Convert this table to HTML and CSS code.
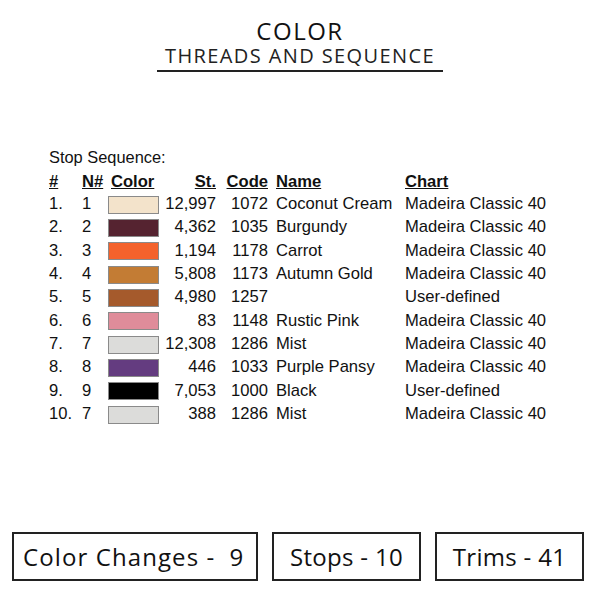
FILE: index.html
```html
<!DOCTYPE html>
<html>
<head>
<meta charset="utf-8">
<link rel="stylesheet" href="styles.css">
</head>
<body>
<div class="page">
  <header class="title">
    <div class="t1">COLOR</div>
    <div class="t2">THREADS AND SEQUENCE</div>
  </header>
  <section class="seq">
    <div class="caption">Stop Sequence:</div>
    <div class="grid">
      <div class="row head">
        <span class="c-n"><u>#</u></span><span class="c-nn"><u>N#</u></span><span class="c-col"><u>Color</u></span><span class="c-st"><u>St.</u></span><span class="c-code"><u>Code</u></span><span class="c-name"><u>Name</u></span><span class="c-chart"><u>Chart</u></span>
      </div>
      <div class="row"><span class="c-n">1.</span><span class="c-nn">1</span><span class="c-col"><i class="sw" style="background:#f3e3cb"></i></span><span class="c-st">12,997</span><span class="c-code">1072</span><span class="c-name">Coconut Cream</span><span class="c-chart">Madeira Classic 40</span></div>
      <div class="row"><span class="c-n">2.</span><span class="c-nn">2</span><span class="c-col"><i class="sw" style="background:#552330"></i></span><span class="c-st">4,362</span><span class="c-code">1035</span><span class="c-name">Burgundy</span><span class="c-chart">Madeira Classic 40</span></div>
      <div class="row"><span class="c-n">3.</span><span class="c-nn">3</span><span class="c-col"><i class="sw" style="background:#f4622c"></i></span><span class="c-st">1,194</span><span class="c-code">1178</span><span class="c-name">Carrot</span><span class="c-chart">Madeira Classic 40</span></div>
      <div class="row"><span class="c-n">4.</span><span class="c-nn">4</span><span class="c-col"><i class="sw" style="background:#c37c34"></i></span><span class="c-st">5,808</span><span class="c-code">1173</span><span class="c-name">Autumn Gold</span><span class="c-chart">Madeira Classic 40</span></div>
      <div class="row"><span class="c-n">5.</span><span class="c-nn">5</span><span class="c-col"><i class="sw" style="background:#a55a2c"></i></span><span class="c-st">4,980</span><span class="c-code">1257</span><span class="c-name"></span><span class="c-chart">User-defined</span></div>
      <div class="row"><span class="c-n">6.</span><span class="c-nn">6</span><span class="c-col"><i class="sw" style="background:#df8c9a"></i></span><span class="c-st">83</span><span class="c-code">1148</span><span class="c-name">Rustic Pink</span><span class="c-chart">Madeira Classic 40</span></div>
      <div class="row"><span class="c-n">7.</span><span class="c-nn">7</span><span class="c-col"><i class="sw" style="background:#dcdcda"></i></span><span class="c-st">12,308</span><span class="c-code">1286</span><span class="c-name">Mist</span><span class="c-chart">Madeira Classic 40</span></div>
      <div class="row"><span class="c-n">8.</span><span class="c-nn">8</span><span class="c-col"><i class="sw" style="background:#643c80"></i></span><span class="c-st">446</span><span class="c-code">1033</span><span class="c-name">Purple Pansy</span><span class="c-chart">Madeira Classic 40</span></div>
      <div class="row"><span class="c-n">9.</span><span class="c-nn">9</span><span class="c-col"><i class="sw" style="background:#000000"></i></span><span class="c-st">7,053</span><span class="c-code">1000</span><span class="c-name">Black</span><span class="c-chart">User-defined</span></div>
      <div class="row"><span class="c-n">10.</span><span class="c-nn">7</span><span class="c-col"><i class="sw" style="background:#dcdcda"></i></span><span class="c-st">388</span><span class="c-code">1286</span><span class="c-name">Mist</span><span class="c-chart">Madeira Classic 40</span></div>
    </div>
  </section>
  <footer class="stats">
    <div class="box b1"><span class="lbl">Color Changes -</span><span class="num">9</span></div>
    <div class="box b2">Stops - 10</div>
    <div class="box b3">Trims - 41</div>
  </footer>
</div>
</body>
</html>
```
FILE: styles.css
```css
html, body {
  margin: 0;
  padding: 0;
  background: #fff;
}
.page {
  width: 600px;
  height: 600px;
  position: relative;
  color: #111;
}
.title {
  display: flex;
  flex-direction: column;
  align-items: center;
  padding-top: 18px;
  font-family: "Open Sans", sans-serif;
}
.t1 {
  font-size: 24px;
  line-height: 26px;
  letter-spacing: 1.5px;
  color: #111;
}
.t2 {
  font-size: 20px;
  line-height: 23px;
  letter-spacing: 1.4px;
  color: #222;
  width: 286px;
  text-align: center;
  padding-bottom: 3px;
  border-bottom: 2px solid #222;
}
.seq {
  padding: 74px 0 0 49px;
  font-family: "Liberation Sans", Arial, sans-serif;
  font-size: 16.6px;
  color: #111;
}
.caption {
  font-size: 16.4px;
  line-height: 22px;
  margin-bottom: 3px;
}
.row {
  display: grid;
  grid-template-columns: 33px 26px 51px 57px 52px 8px 129px auto;
  height: 23.33px;
  line-height: 22px;
  white-space: nowrap;
}
.row.head {
  height: 22px;
  line-height: 22px;
  font-weight: bold;
}
.c-n { grid-column: 1; }
.c-nn { grid-column: 2; }
.c-col { grid-column: 3; display: flex; align-items: center; }
.head .c-col { padding-left: 3px; display: block; }
.c-st { grid-column: 4; text-align: right; }
.c-code { grid-column: 5; text-align: right; }
.c-name { grid-column: 7; }
.c-chart { grid-column: 8; }
.sw {
  display: block;
  width: 49px;
  height: 16px;
  border: 1px solid #8a8a8a;
  box-sizing: content-box;
}
.stats {
  position: absolute;
  left: 12px;
  top: 532px;
  display: flex;
  gap: 14px;
  font-family: "Open Sans", sans-serif;
}
.box {
  height: 45px;
  border: 2px solid #222;
  display: flex;
  align-items: center;
  justify-content: center;
  font-size: 24px;
  color: #111;
  box-sizing: content-box;
  letter-spacing: 0.3px;
}
.b1 { width: 242px; justify-content: flex-start; }
.b1 .lbl { margin-left: 9px; letter-spacing: 1.1px; }
.b1 .num { margin-left: 14px; }
.b2 { width: 145px; }
.b3 { width: 145px; }
```
